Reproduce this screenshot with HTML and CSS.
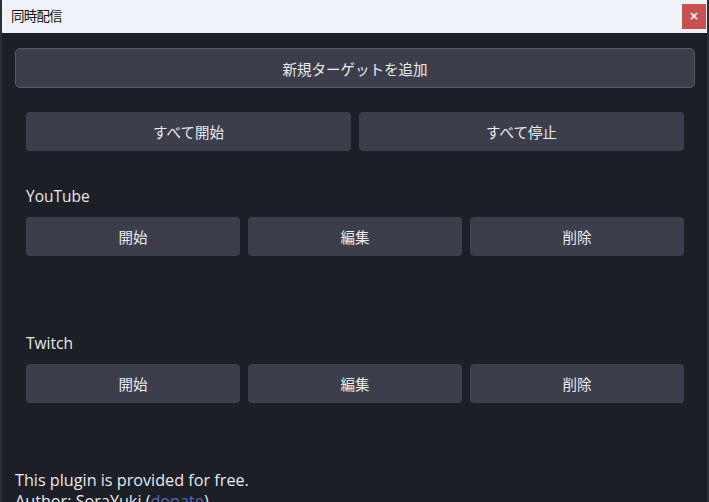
FILE: index.html
```html
<!DOCTYPE html>
<html lang="ja">
<head>
<meta charset="utf-8">
<link rel="stylesheet" href="styles.css">
</head>
<body>
<div class="window">
  <div class="titlebar">
    <span class="title">同時配信</span>
    <button class="close">×</button>
  </div>
  <div class="content">
    <button class="btn add">新規ターゲットを追加</button>
    <div class="inner">
      <div class="row two">
        <button class="btn">すべて開始</button>
        <button class="btn">すべて停止</button>
      </div>
      <div class="target">
        <div class="label">YouTube</div>
        <div class="row three">
          <button class="btn">開始</button>
          <button class="btn">編集</button>
          <button class="btn">削除</button>
        </div>
      </div>
      <div class="target">
        <div class="label">Twitch</div>
        <div class="row three">
          <button class="btn">開始</button>
          <button class="btn">編集</button>
          <button class="btn">削除</button>
        </div>
      </div>
    </div>
    <div class="footer">
      <div>This plugin is provided for free.</div>
      <div>Author: SoraYuki (<a href="#" class="link">donate</a>)</div>
    </div>
  </div>
</div>
</body>
</html>
```

FILE: styles.css
```css
html, body {
  margin: 0;
  padding: 0;
  height: 100%;
  overflow: hidden;
}
body {
  background: #1d1f27;
  font-family: "Open Sans", "Noto Sans CJK JP", sans-serif;
}
.window {
  height: 502px;
  border-left: 2px solid #2c2e35;
  border-right: 2px solid #2c2e35;
  box-sizing: border-box;
  background: #1d1f27;
}
.titlebar {
  height: 33px;
  background: #eff2f8;
  display: flex;
  align-items: flex-start;
  justify-content: space-between;
  padding-left: 9px;
  padding-right: 1px;
}
.title {
  font-family: "Noto Sans CJK JP", sans-serif;
  font-size: 13.5px;
  color: #111;
  line-height: 16px;
  margin-top: 7px;
  letter-spacing: -0.8px;
}
.close {
  margin-top: 4px;
  width: 24px;
  height: 25px;
  border: none;
  background: #c75050;
  color: #fff;
  font-family: "DejaVu Sans", sans-serif;
  font-size: 12px;
  font-weight: bold;
  padding: 0;
  line-height: 25px;
}
.content {
  padding: 15px 12px 0 13px;
}
.btn {
  display: block;
  background: #3c3f4b;
  color: #ebecef;
  border: none;
  border-radius: 4px;
  height: 39px;
  font-family: "Noto Sans CJK JP", sans-serif;
  font-size: 14.5px;
  padding: 0;
}
.btn.add {
  width: 100%;
  height: 40px;
  border: 1px solid #585c6a;
  border-radius: 5px;
}
.inner {
  padding: 24px 11px 0 11px;
}
.row {
  display: grid;
  gap: 8px;
}
.row.two {
  grid-template-columns: 1fr 1fr;
}
.row.three {
  grid-template-columns: 1fr 1fr 1fr;
}
.target {
  padding: 35px 0 42px;
}
.label {
  color: #e8e9ec;
  font-size: 15.5px;
  line-height: 21px;
  margin-bottom: 10px;
}
.footer {
  color: #e8e9ec;
  font-size: 16.2px;
  line-height: 21px;
  margin-top: 25px;
}
.link {
  color: #5866c2;
  text-decoration: none;
}
```
